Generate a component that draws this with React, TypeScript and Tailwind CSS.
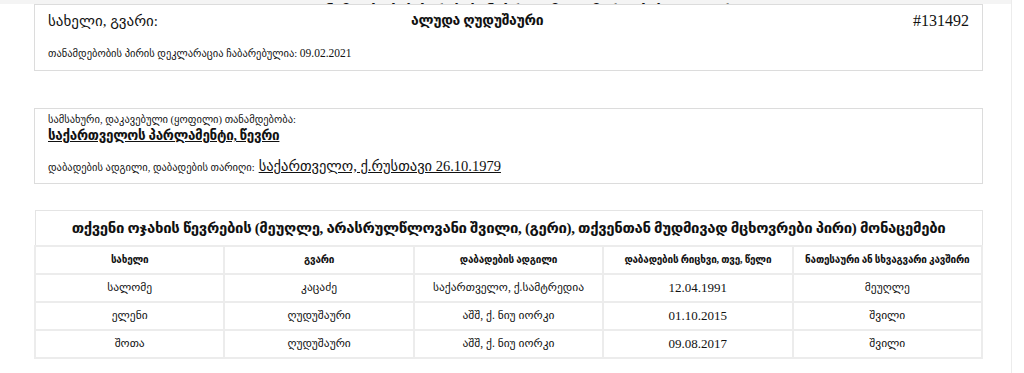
import React from "react";

const FONT = { fontFamily: '"Liberation Serif", "DejaVu Sans", serif' };

type Member = {
  name: string;
  surname: string;
  birthplace: string;
  birthdate: string;
  relation: string;
};

const MEMBERS: Member[] = [
  {name: "სალომე", surname: "კაცაძე", birthplace: "საქართველო, ქ.სამტრედია", birthdate: "12.04.1991", relation: "მეუღლე"},
  {name: "ელენი", surname: "ღუდუშაური", birthplace: "აშშ, ქ. ნიუ იორკი", birthdate: "01.10.2015", relation: "შვილი"},
  {name: "შოთა", surname: "ღუდუშაური", birthplace: "აშშ, ქ. ნიუ იორკი", birthdate: "09.08.2017", relation: "შვილი"},
];

const HEADERS = [
  "სახელი",
  "გვარი",
  "დაბადების ადგილი",
  "დაბადების რიცხვი, თვე, წელი",
  "ნათესაური ან სხვაგვარი კავშირი",
];

export default function App() {
  return (
    <div className="h-[373px] w-[1024px] overflow-hidden bg-white text-[#111]" style={FONT}>
      <div className="h-full w-[1012px] border-r border-[#ececec]">
        {/* cut off heading above */}
        <div className="relative h-[4px] overflow-hidden bg-[#f4f4f4]">
          <div className="absolute bottom-[-17px] left-[60px] right-0 text-center text-[15px] font-bold leading-[22px] tracking-[-0.3px]">
            თანამდებობის პირის ქონებრივი მდგომარეობის დეკლარაცია
          </div>
        </div>

        <div className="flex flex-col pl-[34px]">
          <div className="w-[949px] border border-[#dcdcdc] px-[13px] pb-[8px] pt-[5px]">
            <div className="flex items-center text-[15px] leading-[22px]">
              <span className="w-[363px] shrink-0">სახელი, გვარი:</span>
              <span className="text-[14px] font-bold tracking-[-0.3px]">ალუდა ღუდუშაური</span>
              <span className="flex-1 text-right text-[16px]">#131492</span>
            </div>
            <div className="mt-[13px] text-[10.5px] leading-[16px]">
              თანამდებობის პირის დეკლარაცია ჩაბარებულია: <span className="text-[11.5px]">09.02.2021</span>
            </div>
          </div>

          <div className="mt-[37px] w-[949px] border border-[#dcdcdc] px-[13px] pb-[6px] pt-[4px]">
            <div className="text-[10.5px] leading-[13px]">სამსახური, დაკავებული (ყოფილი) თანამდებობა:</div>
            <div className="text-[13.5px] font-bold leading-[20px] tracking-[-0.3px] underline">
              საქართველოს პარლამენტი, წევრი
            </div>
            <div className="mt-[9px] flex items-baseline gap-[4px]">
              <span className="text-[10.5px]">დაბადების ადგილი, დაბადების თარიღი:</span>
              <span className="text-[14.5px] leading-[22px] underline">საქართველო, ქ.რუსთავი 26.10.1979</span>
            </div>
          </div>

          <table className="mt-[26px] w-[949px] table-fixed border-collapse border border-[#dcdcdc]">
            <thead>
              <tr>
                <th
                  colSpan={5}
                  className="h-[35px] border border-[#e4e4e4] text-center text-[15px] font-bold tracking-[-0.35px]"
                >
                  თქვენი ოჯახის წევრების (მეუღლე, არასრულწლოვანი შვილი, (გერი), თქვენთან მუდმივად მცხოვრები პირი) მონაცემები
                </th>
              </tr>
              <tr>
                {HEADERS.map((h) => (
                  <th
                    key={h}
                    className="h-[28px] border-2 border-[#ececec] text-center text-[10px] font-bold tracking-[-0.2px]"
                  >
                    {h}
                  </th>
                ))}
              </tr>
            </thead>
            <tbody>
              {MEMBERS.map((m) => (
                <tr key={m.name}>
                  <td className="h-[28px] border-2 border-[#ececec] text-center text-[11.5px]">{m.name}</td>
                  <td className="border-2 border-[#ececec] text-center text-[11.5px]">{m.surname}</td>
                  <td className="border-2 border-[#ececec] text-center text-[11.5px]">{m.birthplace}</td>
                  <td className="border-2 border-[#ececec] text-center text-[13px]">{m.birthdate}</td>
                  <td className="border-2 border-[#ececec] text-center text-[11.5px]">{m.relation}</td>
                </tr>
              ))}
            </tbody>
          </table>
        </div>
      </div>
    </div>
  );
}
